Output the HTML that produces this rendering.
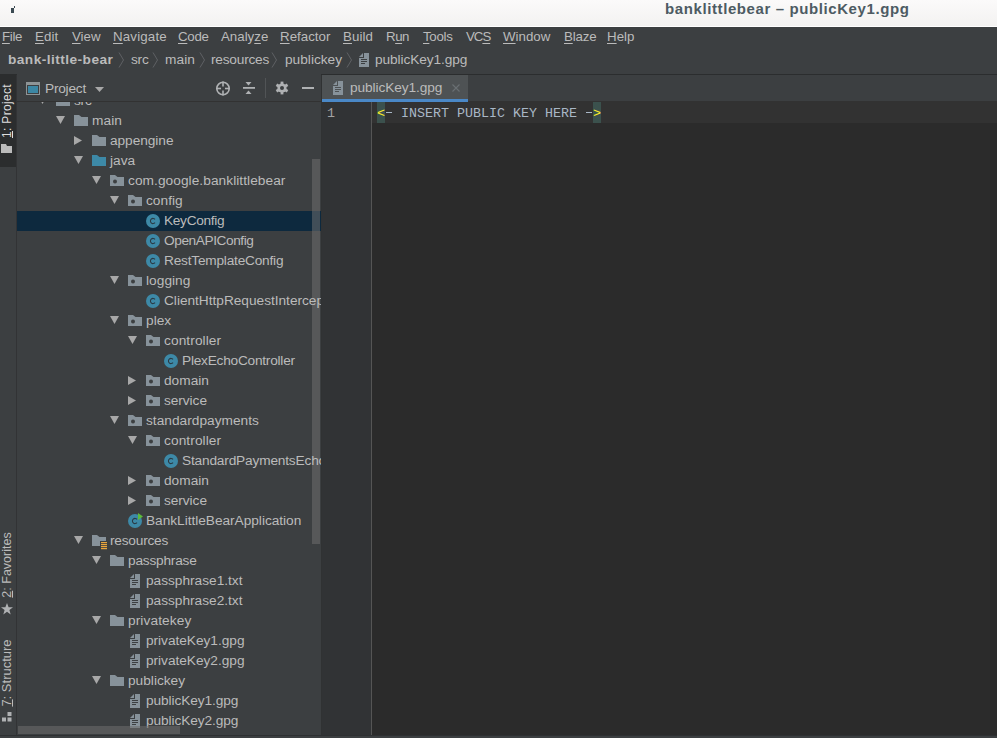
<!DOCTYPE html>
<html><head><meta charset="utf-8">
<style>
*{margin:0;padding:0;box-sizing:border-box}
html,body{width:997px;height:738px;overflow:hidden;background:#3C3F41;font-family:"Liberation Sans", sans-serif;position:relative}
.abs{position:absolute}
.ic{position:absolute;display:block;overflow:visible}
#title{position:absolute;left:0;top:0;width:997px;height:27px;background:linear-gradient(#FBFAFA,#F3F2F1);border-bottom:1px solid #FFFFFF}
#title .t{position:absolute;left:665px;top:-1px;font-weight:bold;font-size:15px;letter-spacing:0.6px;line-height:20px;color:#4D5B63;white-space:nowrap}
.mi{position:absolute;top:27px;font-size:13.3px;line-height:20px;color:#BBBBBB;white-space:nowrap}
.mi u{text-decoration:underline;text-underline-offset:2px}
.bc{position:absolute;top:50px;font-size:13.7px;line-height:20px;color:#BBBBBB;white-space:nowrap}
.chev{position:absolute;top:52px}
.tt{position:absolute;font-size:13.7px;line-height:20px;color:#BBBBBB;white-space:nowrap}
</style></head><body>
<div id="title"><svg class="ic" style="left:11px;top:6px" width="5" height="8"><rect x="0" y="2" width="3" height="5" fill="#3B4A52"/><rect x="3" y="0" width="1" height="2" fill="#3B4A52"/></svg><div class="t">banklittlebear – publicKey1.gpg</div></div>
<!-- menu bar -->
<div class="mi" style="left:2px;letter-spacing:-0.34px"><u>F</u>ile</div>
<div class="mi" style="left:35px;letter-spacing:0.08px"><u>E</u>dit</div>
<div class="mi" style="left:72px;letter-spacing:-0.03px"><u>V</u>iew</div>
<div class="mi" style="left:113px;letter-spacing:0.17px"><u>N</u>avigate</div>
<div class="mi" style="left:178px;letter-spacing:-0.27px"><u>C</u>ode</div>
<div class="mi" style="left:221px;letter-spacing:-0.00px">Analy<u>z</u>e</div>
<div class="mi" style="left:280px;letter-spacing:0.01px"><u>R</u>efactor</div>
<div class="mi" style="left:343px;letter-spacing:0.11px"><u>B</u>uild</div>
<div class="mi" style="left:386px;letter-spacing:-0.46px">R<u>u</u>n</div>
<div class="mi" style="left:423px;letter-spacing:-0.30px"><u>T</u>ools</div>
<div class="mi" style="left:466px;letter-spacing:-1.05px">VC<u>S</u></div>
<div class="mi" style="left:503px;letter-spacing:0.00px"><u>W</u>indow</div>
<div class="mi" style="left:564px;letter-spacing:-0.13px"><u>B</u>laze</div>
<div class="mi" style="left:607px;letter-spacing:0.01px"><u>H</u>elp</div>
<!-- breadcrumbs -->
<div class="bc" style="left:8px;font-weight:bold;letter-spacing:0.45px">bank-little-bear</div>
<svg class="chev" style="left:118px" width="7" height="16"><path d="M1 0.5L5.5 8L1 15.5" stroke="#5E6164" stroke-width="1" fill="none"/></svg>
<div class="bc" style="left:131px;letter-spacing:-0.25px">src</div>
<svg class="chev" style="left:152px" width="7" height="16"><path d="M1 0.5L5.5 8L1 15.5" stroke="#5E6164" stroke-width="1" fill="none"/></svg>
<div class="bc" style="left:165px;letter-spacing:0.07px">main</div>
<svg class="chev" style="left:199px" width="7" height="16"><path d="M1 0.5L5.5 8L1 15.5" stroke="#5E6164" stroke-width="1" fill="none"/></svg>
<div class="bc" style="left:211px;letter-spacing:-0.22px">resources</div>
<svg class="chev" style="left:271px" width="7" height="16"><path d="M1 0.5L5.5 8L1 15.5" stroke="#5E6164" stroke-width="1" fill="none"/></svg>
<div class="bc" style="left:285px;letter-spacing:0.00px">publickey</div>
<svg class="chev" style="left:346px" width="7" height="16"><path d="M1 0.5L5.5 8L1 15.5" stroke="#5E6164" stroke-width="1" fill="none"/></svg>
<svg class="ic" style="left:359px;top:53px" width="11" height="15"><path d="M5 0H10V14H0V5H5Z" fill="#87929A"/><path d="M0 4L4 0V4Z" fill="#87929A"/><rect x="2" y="6" width="6" height="1" fill="#3C3F41"/><rect x="2" y="8" width="6" height="1" fill="#3C3F41"/><rect x="2" y="10" width="4" height="1" fill="#3C3F41"/></svg>
<div class="bc" style="left:375px;letter-spacing:-0.10px">publicKey1.gpg</div>
<!-- separator line under nav -->
<div class="abs" style="left:0;top:74px;width:997px;height:1px;background:#2B2D2E"></div>
<!-- left stripe -->
<div class="abs" style="left:0;top:75px;width:17px;height:663px;background:#3C3F41;border-right:1px solid #323335"></div>
<div class="abs" style="left:0;top:75px;width:16px;height:92px;background:#2B2D2E"></div>
<!-- project panel -->
<div id="panel" class="abs" style="left:17px;top:74px;width:304px;height:661px;background:#3C3F41;overflow:hidden">
</div>
<!-- tree -->
<div class="abs" style="left:17px;top:211px;width:304px;height:20px;background:#0D293E"></div>
<div class="abs" style="left:312px;top:159px;width:8px;height:385px;background:rgba(110,110,110,0.55)"></div>
<div class="abs" style="left:0;top:0;width:321px;height:735px;clip-path:inset(101px 0 0 17px)">
<svg class="ic" style="left:38px;top:96px" width="9" height="8"><path d="M0 0H9L4.5 8Z" fill="#A8A8A8"/></svg>
<svg class="ic" style="left:56px;top:95px" width="16" height="15"><path d="M0 0H5L7.5 2H14V11H0Z" fill="#87929A"/></svg>
<div class="tt" style="left:74px;top:91px;letter-spacing:-0.25px">src</div>
<svg class="ic" style="left:56px;top:116px" width="9" height="8"><path d="M0 0H9L4.5 8Z" fill="#A8A8A8"/></svg>
<svg class="ic" style="left:74px;top:115px" width="16" height="15"><path d="M0 0H5L7.5 2H14V11H0Z" fill="#87929A"/></svg>
<div class="tt" style="left:92px;top:111px;letter-spacing:0.07px">main</div>
<svg class="ic" style="left:74px;top:136px" width="8" height="9"><path d="M0 0V9L8 4.5Z" fill="#A8A8A8"/></svg>
<svg class="ic" style="left:92px;top:135px" width="16" height="15"><path d="M0 0H5L7.5 2H14V11H0Z" fill="#87929A"/></svg>
<div class="tt" style="left:110px;top:131px;letter-spacing:-0.05px">appengine</div>
<svg class="ic" style="left:74px;top:156px" width="9" height="8"><path d="M0 0H9L4.5 8Z" fill="#A8A8A8"/></svg>
<svg class="ic" style="left:92px;top:155px" width="16" height="15"><path d="M0 0H5L7.5 2H14V11H0Z" fill="#3D89A7"/></svg>
<div class="tt" style="left:110px;top:151px;letter-spacing:0.01px">java</div>
<svg class="ic" style="left:92px;top:176px" width="9" height="8"><path d="M0 0H9L4.5 8Z" fill="#A8A8A8"/></svg>
<svg class="ic" style="left:110px;top:175px" width="16" height="15"><path d="M0 0H5L7.5 2H14V11H0Z" fill="#87929A"/><circle cx="5" cy="6.5" r="2" fill="#3C3F41"/></svg>
<div class="tt" style="left:128px;top:171px;letter-spacing:0.06px">com.google.banklittlebear</div>
<svg class="ic" style="left:110px;top:196px" width="9" height="8"><path d="M0 0H9L4.5 8Z" fill="#A8A8A8"/></svg>
<svg class="ic" style="left:128px;top:195px" width="16" height="15"><path d="M0 0H5L7.5 2H14V11H0Z" fill="#87929A"/><circle cx="5" cy="6.5" r="2" fill="#3C3F41"/></svg>
<div class="tt" style="left:146px;top:191px;letter-spacing:0.03px">config</div>
<svg class="ic" style="left:146px;top:214px" width="16" height="16"><circle cx="7" cy="7" r="7" fill="#3D89A7"/><path d="M9 5.3A2.6 2.6 0 1 0 9 8.7" stroke="#2A3A44" stroke-width="1.05" fill="none"/></svg>
<div class="tt" style="left:164px;top:211px;letter-spacing:-0.32px">KeyConfig</div>
<svg class="ic" style="left:146px;top:234px" width="16" height="16"><circle cx="7" cy="7" r="7" fill="#3D89A7"/><path d="M9 5.3A2.6 2.6 0 1 0 9 8.7" stroke="#2A3A44" stroke-width="1.05" fill="none"/></svg>
<div class="tt" style="left:164px;top:231px;letter-spacing:-0.43px">OpenAPIConfig</div>
<svg class="ic" style="left:146px;top:254px" width="16" height="16"><circle cx="7" cy="7" r="7" fill="#3D89A7"/><path d="M9 5.3A2.6 2.6 0 1 0 9 8.7" stroke="#2A3A44" stroke-width="1.05" fill="none"/></svg>
<div class="tt" style="left:164px;top:251px;letter-spacing:-0.22px">RestTemplateConfig</div>
<svg class="ic" style="left:110px;top:276px" width="9" height="8"><path d="M0 0H9L4.5 8Z" fill="#A8A8A8"/></svg>
<svg class="ic" style="left:128px;top:275px" width="16" height="15"><path d="M0 0H5L7.5 2H14V11H0Z" fill="#87929A"/><circle cx="5" cy="6.5" r="2" fill="#3C3F41"/></svg>
<div class="tt" style="left:146px;top:271px;letter-spacing:0.04px">logging</div>
<svg class="ic" style="left:146px;top:294px" width="16" height="16"><circle cx="7" cy="7" r="7" fill="#3D89A7"/><path d="M9 5.3A2.6 2.6 0 1 0 9 8.7" stroke="#2A3A44" stroke-width="1.05" fill="none"/></svg>
<div class="tt" style="left:164px;top:291px;letter-spacing:-0.02px">ClientHttpRequestInterceptor</div>
<svg class="ic" style="left:110px;top:316px" width="9" height="8"><path d="M0 0H9L4.5 8Z" fill="#A8A8A8"/></svg>
<svg class="ic" style="left:128px;top:315px" width="16" height="15"><path d="M0 0H5L7.5 2H14V11H0Z" fill="#87929A"/><circle cx="5" cy="6.5" r="2" fill="#3C3F41"/></svg>
<div class="tt" style="left:146px;top:311px;letter-spacing:0.03px">plex</div>
<svg class="ic" style="left:128px;top:336px" width="9" height="8"><path d="M0 0H9L4.5 8Z" fill="#A8A8A8"/></svg>
<svg class="ic" style="left:146px;top:335px" width="16" height="15"><path d="M0 0H5L7.5 2H14V11H0Z" fill="#87929A"/><circle cx="5" cy="6.5" r="2" fill="#3C3F41"/></svg>
<div class="tt" style="left:164px;top:331px;letter-spacing:0.09px">controller</div>
<svg class="ic" style="left:164px;top:354px" width="16" height="16"><circle cx="7" cy="7" r="7" fill="#3D89A7"/><path d="M9 5.3A2.6 2.6 0 1 0 9 8.7" stroke="#2A3A44" stroke-width="1.05" fill="none"/></svg>
<div class="tt" style="left:182px;top:351px;letter-spacing:-0.24px">PlexEchoController</div>
<svg class="ic" style="left:128px;top:376px" width="8" height="9"><path d="M0 0V9L8 4.5Z" fill="#A8A8A8"/></svg>
<svg class="ic" style="left:146px;top:375px" width="16" height="15"><path d="M0 0H5L7.5 2H14V11H0Z" fill="#87929A"/><circle cx="5" cy="6.5" r="2" fill="#3C3F41"/></svg>
<div class="tt" style="left:164px;top:371px;letter-spacing:0.00px">domain</div>
<svg class="ic" style="left:128px;top:396px" width="8" height="9"><path d="M0 0V9L8 4.5Z" fill="#A8A8A8"/></svg>
<svg class="ic" style="left:146px;top:395px" width="16" height="15"><path d="M0 0H5L7.5 2H14V11H0Z" fill="#87929A"/><circle cx="5" cy="6.5" r="2" fill="#3C3F41"/></svg>
<div class="tt" style="left:164px;top:391px;letter-spacing:-0.06px">service</div>
<svg class="ic" style="left:110px;top:416px" width="9" height="8"><path d="M0 0H9L4.5 8Z" fill="#A8A8A8"/></svg>
<svg class="ic" style="left:128px;top:415px" width="16" height="15"><path d="M0 0H5L7.5 2H14V11H0Z" fill="#87929A"/><circle cx="5" cy="6.5" r="2" fill="#3C3F41"/></svg>
<div class="tt" style="left:146px;top:411px;letter-spacing:0.02px">standardpayments</div>
<svg class="ic" style="left:128px;top:436px" width="9" height="8"><path d="M0 0H9L4.5 8Z" fill="#A8A8A8"/></svg>
<svg class="ic" style="left:146px;top:435px" width="16" height="15"><path d="M0 0H5L7.5 2H14V11H0Z" fill="#87929A"/><circle cx="5" cy="6.5" r="2" fill="#3C3F41"/></svg>
<div class="tt" style="left:164px;top:431px;letter-spacing:0.09px">controller</div>
<svg class="ic" style="left:164px;top:454px" width="16" height="16"><circle cx="7" cy="7" r="7" fill="#3D89A7"/><path d="M9 5.3A2.6 2.6 0 1 0 9 8.7" stroke="#2A3A44" stroke-width="1.05" fill="none"/></svg>
<div class="tt" style="left:182px;top:451px;letter-spacing:-0.18px">StandardPaymentsEchoController</div>
<svg class="ic" style="left:128px;top:476px" width="8" height="9"><path d="M0 0V9L8 4.5Z" fill="#A8A8A8"/></svg>
<svg class="ic" style="left:146px;top:475px" width="16" height="15"><path d="M0 0H5L7.5 2H14V11H0Z" fill="#87929A"/><circle cx="5" cy="6.5" r="2" fill="#3C3F41"/></svg>
<div class="tt" style="left:164px;top:471px;letter-spacing:0.00px">domain</div>
<svg class="ic" style="left:128px;top:496px" width="8" height="9"><path d="M0 0V9L8 4.5Z" fill="#A8A8A8"/></svg>
<svg class="ic" style="left:146px;top:495px" width="16" height="15"><path d="M0 0H5L7.5 2H14V11H0Z" fill="#87929A"/><circle cx="5" cy="6.5" r="2" fill="#3C3F41"/></svg>
<div class="tt" style="left:164px;top:491px;letter-spacing:-0.06px">service</div>
<svg class="ic" style="left:128px;top:514px" width="16" height="16"><circle cx="7" cy="7" r="7" fill="#3D89A7"/><path d="M9 5.3A2.6 2.6 0 1 0 9 8.7" stroke="#2A3A44" stroke-width="1.05" fill="none"/><path d="M10 -1L15 2.5L10 6Z" fill="#5DBB3B"/></svg>
<div class="tt" style="left:146px;top:511px;letter-spacing:-0.03px">BankLittleBearApplication</div>
<svg class="ic" style="left:74px;top:536px" width="9" height="8"><path d="M0 0H9L4.5 8Z" fill="#A8A8A8"/></svg>
<svg class="ic" style="left:92px;top:535px" width="16" height="15"><path d="M0 0H5L7.5 2H14V11H0Z" fill="#87929A"/><rect x="8" y="6" width="8" height="8" fill="#3C3F41"/><rect x="9" y="7" width="6" height="1.2" fill="#E9A53C"/><rect x="9" y="9" width="6" height="1.2" fill="#E9A53C"/><rect x="9" y="11" width="6" height="1.2" fill="#E9A53C"/><rect x="9" y="13" width="6" height="1.2" fill="#E9A53C"/></svg>
<div class="tt" style="left:110px;top:531px;letter-spacing:-0.22px">resources</div>
<svg class="ic" style="left:92px;top:556px" width="9" height="8"><path d="M0 0H9L4.5 8Z" fill="#A8A8A8"/></svg>
<svg class="ic" style="left:110px;top:555px" width="16" height="15"><path d="M0 0H5L7.5 2H14V11H0Z" fill="#87929A"/></svg>
<div class="tt" style="left:128px;top:551px;letter-spacing:-0.22px">passphrase</div>
<svg class="ic" style="left:130px;top:574px" width="11" height="15"><path d="M5 0H10V14H0V5H5Z" fill="#87929A"/><path d="M0 4L4 0V4Z" fill="#87929A"/><rect x="2" y="6" width="6" height="1" fill="#3C3F41"/><rect x="2" y="8" width="6" height="1" fill="#3C3F41"/><rect x="2" y="10" width="4" height="1" fill="#3C3F41"/></svg>
<div class="tt" style="left:146px;top:571px;letter-spacing:-0.01px">passphrase1.txt</div>
<svg class="ic" style="left:130px;top:594px" width="11" height="15"><path d="M5 0H10V14H0V5H5Z" fill="#87929A"/><path d="M0 4L4 0V4Z" fill="#87929A"/><rect x="2" y="6" width="6" height="1" fill="#3C3F41"/><rect x="2" y="8" width="6" height="1" fill="#3C3F41"/><rect x="2" y="10" width="4" height="1" fill="#3C3F41"/></svg>
<div class="tt" style="left:146px;top:591px;letter-spacing:-0.01px">passphrase2.txt</div>
<svg class="ic" style="left:92px;top:616px" width="9" height="8"><path d="M0 0H9L4.5 8Z" fill="#A8A8A8"/></svg>
<svg class="ic" style="left:110px;top:615px" width="16" height="15"><path d="M0 0H5L7.5 2H14V11H0Z" fill="#87929A"/></svg>
<div class="tt" style="left:128px;top:611px;letter-spacing:0.10px">privatekey</div>
<svg class="ic" style="left:130px;top:634px" width="11" height="15"><path d="M5 0H10V14H0V5H5Z" fill="#87929A"/><path d="M0 4L4 0V4Z" fill="#87929A"/><rect x="2" y="6" width="6" height="1" fill="#3C3F41"/><rect x="2" y="8" width="6" height="1" fill="#3C3F41"/><rect x="2" y="10" width="4" height="1" fill="#3C3F41"/></svg>
<div class="tt" style="left:146px;top:631px;letter-spacing:-0.03px">privateKey1.gpg</div>
<svg class="ic" style="left:130px;top:654px" width="11" height="15"><path d="M5 0H10V14H0V5H5Z" fill="#87929A"/><path d="M0 4L4 0V4Z" fill="#87929A"/><rect x="2" y="6" width="6" height="1" fill="#3C3F41"/><rect x="2" y="8" width="6" height="1" fill="#3C3F41"/><rect x="2" y="10" width="4" height="1" fill="#3C3F41"/></svg>
<div class="tt" style="left:146px;top:651px;letter-spacing:-0.03px">privateKey2.gpg</div>
<svg class="ic" style="left:92px;top:676px" width="9" height="8"><path d="M0 0H9L4.5 8Z" fill="#A8A8A8"/></svg>
<svg class="ic" style="left:110px;top:675px" width="16" height="15"><path d="M0 0H5L7.5 2H14V11H0Z" fill="#87929A"/></svg>
<div class="tt" style="left:128px;top:671px;letter-spacing:0.00px">publickey</div>
<svg class="ic" style="left:130px;top:694px" width="11" height="15"><path d="M5 0H10V14H0V5H5Z" fill="#87929A"/><path d="M0 4L4 0V4Z" fill="#87929A"/><rect x="2" y="6" width="6" height="1" fill="#3C3F41"/><rect x="2" y="8" width="6" height="1" fill="#3C3F41"/><rect x="2" y="10" width="4" height="1" fill="#3C3F41"/></svg>
<div class="tt" style="left:146px;top:691px;letter-spacing:-0.10px">publicKey1.gpg</div>
<svg class="ic" style="left:130px;top:714px" width="11" height="15"><path d="M5 0H10V14H0V5H5Z" fill="#87929A"/><path d="M0 4L4 0V4Z" fill="#87929A"/><rect x="2" y="6" width="6" height="1" fill="#3C3F41"/><rect x="2" y="8" width="6" height="1" fill="#3C3F41"/><rect x="2" y="10" width="4" height="1" fill="#3C3F41"/></svg>
<div class="tt" style="left:146px;top:711px;letter-spacing:-0.10px">publicKey2.gpg</div>
</div>
<!-- panel header -->
<div class="abs" style="left:17px;top:75px;width:304px;height:27px;background:#3C3F41;border-bottom:1px solid #323232"></div>
<svg class="ic" style="left:26px;top:82px" width="14" height="13"><rect x="0.5" y="0.5" width="13" height="12" fill="none" stroke="#8E9496"/><rect x="0" y="0" width="14" height="3" fill="#8E9496"/><rect x="2" y="4" width="10" height="7" fill="#3C87A4"/></svg>
<div class="tt" style="left:45px;top:79px;letter-spacing:-0.23px">Project</div>
<svg class="ic" style="left:95px;top:87px" width="9" height="6"><path d="M0 0H9L4.5 5Z" fill="#A8A8A8"/></svg>
<svg class="ic" style="left:215px;top:80px;transform:translateY(0.5px)" width="16" height="16"><circle cx="8" cy="8" r="6.2" stroke="#AFB1B3" stroke-width="1.6" fill="none"/><rect x="7.2" y="1" width="1.6" height="5" fill="#AFB1B3"/><rect x="7.2" y="10" width="1.6" height="5" fill="#AFB1B3"/><rect x="1" y="7.2" width="5" height="1.6" fill="#AFB1B3"/><rect x="10" y="7.2" width="5" height="1.6" fill="#AFB1B3"/></svg>
<svg class="ic" style="left:242px;top:81px" width="14" height="14"><rect x="1" y="6" width="12" height="1.8" fill="#AFB1B3"/><path d="M3.5 1H9.5L6.5 4.5Z" fill="#AFB1B3"/><path d="M3.5 13H9.5L6.5 9.5Z" fill="#AFB1B3"/></svg>
<div class="abs" style="left:265px;top:78px;width:1px;height:20px;background:#515456"></div>
<svg class="ic" style="left:275px;top:81px" width="14" height="14"><g fill="#AFB1B3"><circle cx="7" cy="7" r="4.6"/><rect x="5.6" y="0.6" width="2.8" height="12.8"/><rect x="5.6" y="0.6" width="2.8" height="12.8" transform="rotate(60 7 7)"/><rect x="5.6" y="0.6" width="2.8" height="12.8" transform="rotate(120 7 7)"/></g><circle cx="7" cy="7" r="2" fill="#3C3F41"/></svg>
<div class="abs" style="left:302px;top:87px;width:12px;height:2px;background:#AFB1B3"></div>
<!-- scrollbars -->
<div class="abs" style="left:18px;top:726px;width:162px;height:8px;background:rgba(110,110,110,0.55)"></div>
<!-- panel / editor divider -->
<div class="abs" style="left:321px;top:75px;width:1px;height:660px;background:#303233"></div>
<!-- editor tabs -->
<div class="abs" style="left:322px;top:75px;width:675px;height:27px;background:#3C3F41;border-bottom:1px solid #323232"></div>
<div class="abs" style="left:322px;top:75px;width:146px;height:24px;background:#4E5254"></div>
<div class="abs" style="left:322px;top:99px;width:146px;height:3px;background:#4A88C7"></div>
<svg class="ic" style="left:333px;top:81px" width="11" height="15"><path d="M5 0H10V14H0V5H5Z" fill="#87929A"/><path d="M0 4L4 0V4Z" fill="#87929A"/><rect x="2" y="6" width="6" height="1" fill="#4E5254"/><rect x="2" y="8" width="6" height="1" fill="#4E5254"/><rect x="2" y="10" width="4" height="1" fill="#4E5254"/></svg>
<div class="tt" style="left:350px;top:78px;letter-spacing:-0.10px">publicKey1.gpg</div>
<svg class="ic" style="left:452px;top:84px" width="8" height="8"><path d="M0.5 0.5L7.5 7.5M7.5 0.5L0.5 7.5" stroke="#6A7073" stroke-width="1.1"/></svg>
<!-- editor -->
<div class="abs" style="left:322px;top:102px;width:49px;height:633px;background:#313335"></div>
<div class="abs" style="left:371px;top:102px;width:1px;height:633px;background:#555555"></div>
<div class="abs" style="left:372px;top:102px;width:625px;height:633px;background:#2B2B2B"></div>
<div class="abs" style="left:372px;top:102px;width:625px;height:21px;background:#323232"></div>
<div class="abs" style="left:327px;top:103px;font-family:'Liberation Mono', monospace;font-size:13.33px;line-height:21px;color:#A4A3A3">1</div>
<div class="abs" style="left:377px;top:102px;width:8px;height:21px;background:#3B514D"></div>
<div class="abs" style="left:593px;top:102px;width:8px;height:21px;background:#3B514D"></div>
<div class="abs" style="left:377px;top:103px;font-family:'Liberation Mono', monospace;font-size:13.33px;line-height:21px;color:#A9B7C6;white-space:pre"><span style="color:#FFEF28">&lt;</span>  INSERT PUBLIC KEY HERE  <span style="color:#FFEF28">&gt;</span></div>
<div class="abs" style="left:386px;top:112px;width:6px;height:1px;background:#A9B7C6"></div>
<div class="abs" style="left:586px;top:112px;width:6px;height:1px;background:#A9B7C6"></div>
<!-- bottom -->
<div class="abs" style="left:0;top:735px;width:997px;height:1px;background:#2E3032"></div>
<div class="abs" style="left:0;top:736px;width:997px;height:2px;background:#3C3F41"></div>
<!-- stripe labels -->
<div class="abs" style="left:-23px;top:103px;width:60px;height:16px;font-size:12px;letter-spacing:0.33px;line-height:16px;color:#DDDDDD;transform:rotate(-90deg);white-space:nowrap;text-align:center"><u>1</u>: Project</div>
<svg class="ic" style="left:1px;top:144px" width="12" height="10"><path d="M0 0H5L6 2H11V9H0Z" fill="#BBBBBB"/></svg>
<div class="abs" style="left:-31px;top:557px;width:76px;height:16px;font-size:12.5px;line-height:16px;color:#BBBBBB;transform:rotate(-90deg);white-space:nowrap;text-align:center"><u>2</u>: Favorites</div>
<svg class="ic" style="left:1px;top:603px" width="12" height="12"><path d="M6 0L7.6 4.2H12L8.4 6.9L9.7 11.5L6 8.7L2.3 11.5L3.6 6.9L0 4.2H4.4Z" fill="#AFB1B3"/></svg>
<div class="abs" style="left:-31px;top:665px;width:76px;height:16px;font-size:13px;line-height:16px;color:#BBBBBB;transform:rotate(-90deg);white-space:nowrap;text-align:center"><u>7</u>: Structure</div>
<svg class="ic" style="left:2px;top:712px" width="10" height="10"><rect x="5.5" y="0" width="4" height="4" fill="#AFB1B3"/><rect x="0" y="5.5" width="4" height="4" fill="#AFB1B3"/><rect x="5.5" y="5.5" width="4" height="4" fill="#AFB1B3"/></svg>
</body></html>
